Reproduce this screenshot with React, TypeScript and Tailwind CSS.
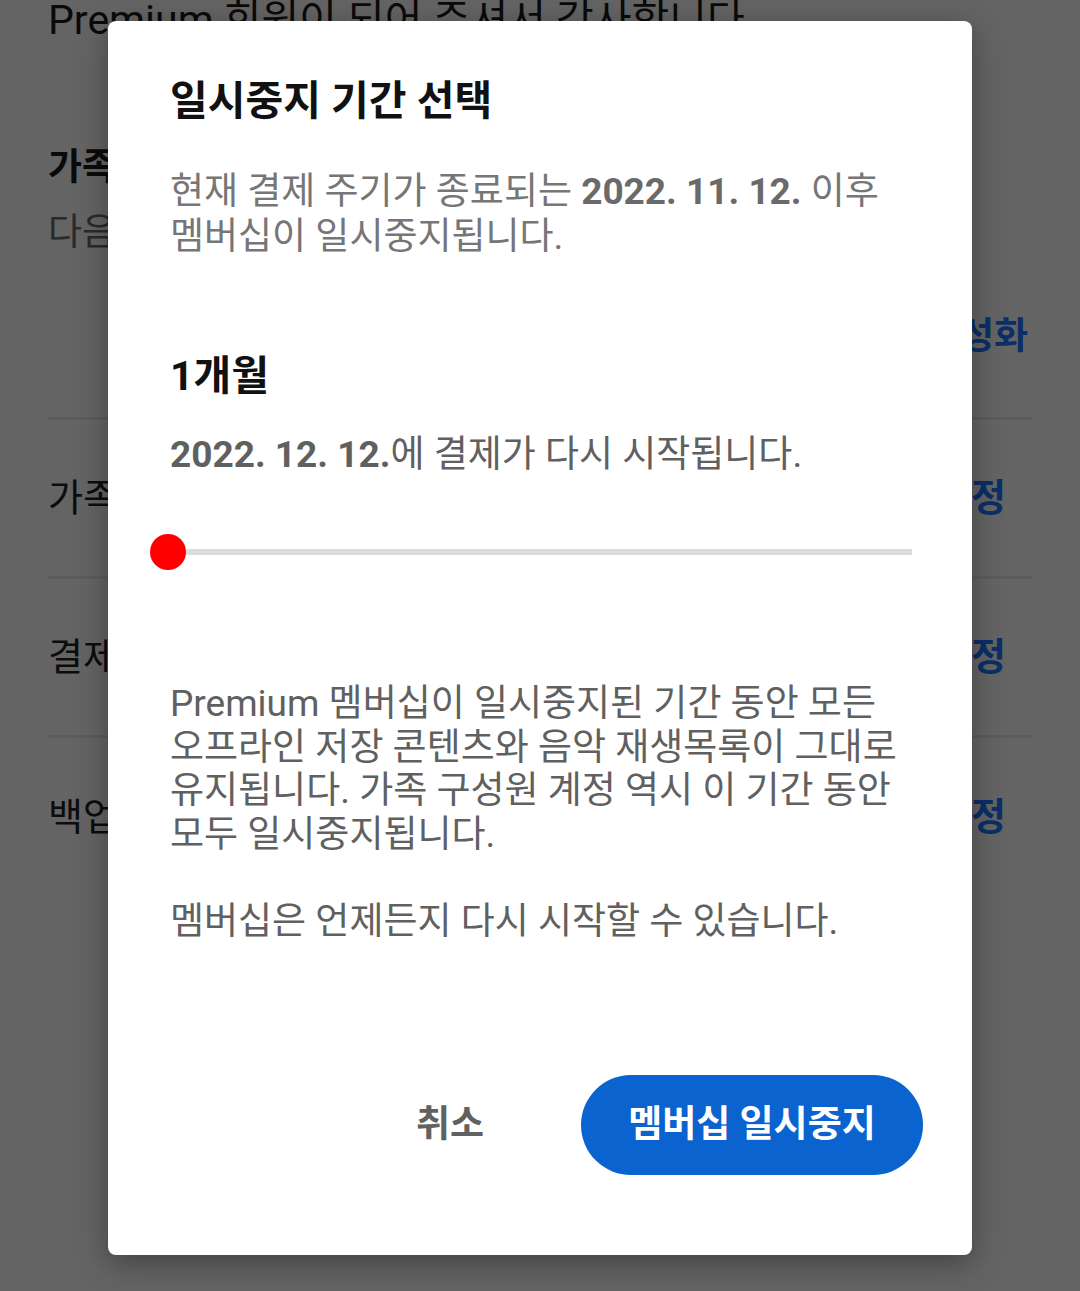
import React from "react";

const font = "font-['Roboto','Noto_Sans_CJK_KR',sans-serif]";

function BackgroundRow({ label, action }: { label: string; action: string }) {
  return (
    <div className="flex h-[159px] items-center justify-between border-b-[3px] border-[#5c5c5c]">
      <span className="text-[38px] text-[#0c0c0c]">{label}</span>
      <span className="pr-[26px] text-[38px] font-bold text-[#0b2f66]">{action}</span>
    </div>
  );
}

export default function App() {
  return (
    <div className={`relative h-[1291px] w-full overflow-hidden bg-[#646464] ${font}`}>
      {/* 뒤쪽 페이지 (어둡게) */}
      <div className="px-[48px]">
        <p className="-mt-[4px] text-[41px] leading-[48px] text-[#0a0a0a]">
          Premium 회원이 되어 주셔서 감사합니다.
        </p>
        <div className="mt-[101px] flex flex-col">
          <span className="text-[37px] font-bold leading-[46px] text-[#0a0a0a]">가족 요금제</span>
          <span className="mt-[19px] text-[37px] leading-[46px] text-[#2a2a2a]">다음 결제일: 2022. 11. 12.</span>
        </div>
        <div className="flex justify-end pt-[58px] pb-[57px] border-b-[3px] border-[#5c5c5c]">
          <span className="pr-[4px] text-[37px] font-bold leading-[46px] text-[#0b2f66]">멤버십 비활성화</span>
        </div>
        <BackgroundRow label="가족 구성원 관리" action="수정" />
        <BackgroundRow label="결제 수단" action="수정" />
        <div className="flex h-[159px] items-center justify-between">
          <span className="text-[38px] text-[#0c0c0c]">백업 결제 수단</span>
          <span className="pr-[26px] text-[38px] font-bold text-[#0b2f66]">수정</span>
        </div>
      </div>

      {/* 다이얼로그 */}
      <div className="absolute left-[108px] top-[21px] flex h-[1234px] w-[864px] flex-col rounded-[8px] bg-white pl-[62px] pr-[40px] pt-[52px] shadow-[0_8px_30px_rgba(0,0,0,0.35)]">
        <h1 className="text-[41px] font-bold leading-[56px] text-[#111]">일시중지 기간 선택</h1>
        <p className="mt-[40px] whitespace-nowrap text-[37px] leading-[45px] text-[#767676]">
          현재 결제 주기가 종료되는 <b className="font-bold text-[#6a6a6a]">2022. 11. 12.</b> 이후
          <br />
          멤버십이 일시중지됩니다.
        </p>

        <h2 className="mt-[92px] text-[41px] font-bold leading-[50px] text-[#111]">1개월</h2>
        <p className="mt-[31px] whitespace-nowrap text-[37px] leading-[45px] text-[#606060]">
          <b className="font-bold">2022. 12. 12.</b>에 결제가 다시 시작됩니다.
        </p>

        {/* 슬라이더 */}
        <div className="relative mt-[57px] mr-[20px] flex h-[36px] items-center">
          <div className="h-[6px] w-full bg-[#dcdcdc]" />
          <div className="absolute left-[-20px] top-0 h-[36px] w-[36px] rounded-full bg-[#ff0000]" />
        </div>

        <p className="mt-[112px] whitespace-nowrap text-[37px] leading-[43.5px] text-[#606060]">
          Premium 멤버십이 일시중지된 기간 동안 모든
          <br />
          오프라인 저장 콘텐츠와 음악 재생목록이 그대로
          <br />
          유지됩니다. 가족 구성원 계정 역시 이 기간 동안
          <br />
          모두 일시중지됩니다.
          <br />
          <br />
          멤버십은 언제든지 다시 시작할 수 있습니다.
        </p>

        <div className="mt-auto mb-[80px] mr-[9px] flex items-center justify-end gap-[73px]">
          <button className="px-[24px] text-[37px] font-bold leading-[100px] text-[#616161]">취소</button>
          <button className="h-[100px] w-[342px] rounded-full bg-[#0a63cf] text-[37px] font-bold text-white">
            멤버십 일시중지
          </button>
        </div>
      </div>
    </div>
  );
}
